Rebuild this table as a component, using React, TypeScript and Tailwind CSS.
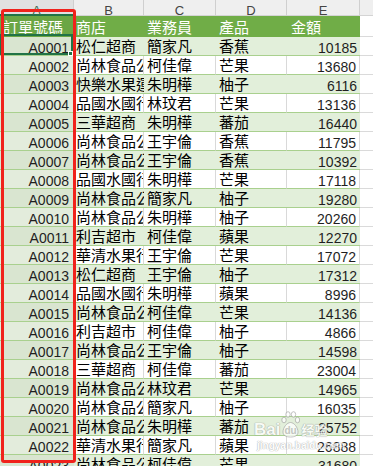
import React from "react";

type Row = [string, string, string, string, number];

const rows: Row[] = [
  ["A0001", "松仁超商", "簡家凡", "香蕉", 10185],
  ["A0002", "尚林食品公司", "柯佳偉", "芒果", 13680],
  ["A0003", "快樂水果運銷", "朱明樺", "柚子", 6116],
  ["A0004", "品國水國行", "林玟君", "芒果", 13136],
  ["A0005", "三華超商", "朱明樺", "蕃茄", 16440],
  ["A0006", "尚林食品公司", "王宇倫", "香蕉", 11795],
  ["A0007", "尚林食品公司", "王宇倫", "香蕉", 10392],
  ["A0008", "品國水國行", "朱明樺", "芒果", 17118],
  ["A0009", "尚林食品公司", "簡家凡", "柚子", 19280],
  ["A0010", "尚林食品公司", "朱明樺", "柚子", 20260],
  ["A0011", "利吉超市", "柯佳偉", "蘋果", 12270],
  ["A0012", "華清水果行", "王宇倫", "芒果", 17072],
  ["A0013", "松仁超商", "王宇倫", "柚子", 17312],
  ["A0014", "品國水國行", "朱明樺", "蘋果", 8996],
  ["A0015", "尚林食品公司", "柯佳偉", "芒果", 14136],
  ["A0016", "利吉超市", "柯佳偉", "柚子", 4866],
  ["A0017", "尚林食品公司", "王宇倫", "柚子", 14598],
  ["A0018", "三華超商", "柯佳偉", "蕃茄", 23004],
  ["A0019", "尚林食品公司", "林玟君", "芒果", 14965],
  ["A0020", "尚林食品公司", "簡家凡", "柚子", 16035],
  ["A0021", "尚林食品公司", "朱明樺", "蕃茄", 25752],
  ["A0022", "華清水果行", "簡家凡", "蘋果", 26888],
  ["A0023", "尚林食品公司", "柯佳偉", "芒果", 31680],
];

const cjk = "font-['Noto_Sans_CJK_TC',sans-serif]";
const latin = "font-['Liberation_Sans',sans-serif]";

function ColHeader({ letter, w, active }: { letter: string; w: string; active?: boolean }) {
  return (
    <div
      className={`${w} shrink-0 h-[16px] border-r border-r-[#cfcfcf] text-center pt-[4px] text-[13px] leading-[13px] ${latin} ${
        active ? "bg-[#e1e1e1] border-b-2 border-b-[#217346] text-[#3f6b4f]" : "bg-[#efefef] border-b border-b-[#d4d4d4] text-[#444]"
      }`}
    >
      {letter}
    </div>
  );
}

function Watermark() {
  return (
    <div className="pointer-events-none absolute left-[254px] top-[411px] opacity-75">
      <div className="flex items-end">
        <span className={`text-[17px] font-bold leading-[17px] text-white ${latin} [text-shadow:0_0_1px_#8a8a8a,0_0_1px_#8a8a8a]`}>
          Bai
        </span>
        <div className="relative ml-[1px] h-[27px] w-[19px]">
          <svg width="19" height="27" viewBox="0 0 19 27" className="absolute left-0 top-0">
            <g fill="#ffffff" stroke="#9a9a9a" strokeWidth="0.8">
              <ellipse cx="3" cy="9" rx="2.2" ry="2.8" />
              <ellipse cx="7" cy="3.5" rx="2.2" ry="2.8" />
              <ellipse cx="12.5" cy="3.5" rx="2.2" ry="2.8" />
              <ellipse cx="16.5" cy="9" rx="2.2" ry="2.8" />
              <path d="M9.5 11.5c3.5 0 7.5 5 7.5 9.5 0 3.5-3 5-7.5 5S2 24.5 2 21c0-4.5 4-9.5 7.5-9.5z" />
            </g>
          </svg>
          <span className={`absolute left-[3px] top-[15px] text-[10px] font-bold leading-[10px] text-[#b8b8b8] ${latin}`}>du</span>
        </div>
        <span className={`ml-[1px] text-[13px] font-bold leading-[17px] text-white font-['Noto_Sans_CJK_SC',sans-serif] [text-shadow:0_0_1px_#8a8a8a,0_0_1px_#8a8a8a]`}>
          经验
        </span>
      </div>
      <div className={`mt-[2px] pl-[3px] text-[10px] font-bold leading-[11px] text-white ${latin} [text-shadow:0_0_1px_#9a9a9a,0_0_1px_#9a9a9a]`}>
        jingyan.baidu.com
      </div>
    </div>
  );
}

export default function App() {
  return (
    <div className="relative h-[466px] w-[373px] overflow-hidden bg-white">
      {/* column letters */}
      <div className="flex">
        <ColHeader letter="A" w="w-[74px]" active />
        <ColHeader letter="B" w="w-[70px]" />
        <ColHeader letter="C" w="w-[72px]" />
        <ColHeader letter="D" w="w-[71px]" />
        <ColHeader letter="E" w="w-[73px]" />
        <div className="h-[16px] flex-1 border-b border-b-[#d4d4d4] bg-[#efefef]" />
      </div>

      {/* table header */}
      <div className={`flex h-[21px] text-[15px] leading-[21px] text-white ${cjk}`}>
        <div className="w-[74px] shrink-0 bg-[#6ba644] pl-[3px]">訂單號碼</div>
        <div className="w-[70px] shrink-0 bg-[#70ad47] pl-[2px]">商店</div>
        <div className="w-[72px] shrink-0 bg-[#70ad47] pl-[3px]">業務員</div>
        <div className="w-[71px] shrink-0 bg-[#70ad47] pl-[3px]">產品</div>
        <div className="w-[73px] shrink-0 bg-[#70ad47] pl-[4px]">金額</div>
        <div className="flex-1 border-b border-b-[#dadada] bg-white" />
      </div>

      {/* data rows */}
      {rows.map(([id, shop, rep, product, amount], i) => {
        const green = i % 2 === 0;
        const cell = green ? "bg-[#e2efda]" : "bg-white border-r border-r-[#d9d9d9]";
        return (
          <div key={id} className="flex h-[19px]">
            <div
              className={`w-[74px] shrink-0 border-b border-b-[#a9d08e] pr-[5px] pt-[3px] text-right text-[14px] leading-[16px] text-[#1f1f1f] ${latin} ${
                green ? "bg-[#d9e5d0]" : "bg-[#e3ecdc]"
              }`}
            >
              {id}
            </div>
            <div className={`w-[70px] shrink-0 overflow-hidden whitespace-nowrap border-b border-b-[#a9d08e] pl-[2px] text-[15px] leading-[17px] text-black ${cjk} ${cell}`}>
              {shop}
            </div>
            <div className={`w-[72px] shrink-0 overflow-hidden whitespace-nowrap border-b border-b-[#a9d08e] pl-[3px] text-[15px] leading-[17px] text-black ${cjk} ${cell}`}>
              {rep}
            </div>
            <div className={`w-[71px] shrink-0 overflow-hidden whitespace-nowrap border-b border-b-[#a9d08e] pl-[3px] text-[15px] leading-[17px] text-black ${cjk} ${cell}`}>
              {product}
            </div>
            <div className={`w-[73px] shrink-0 border-b border-b-[#a9d08e] pr-[3px] pt-[3px] text-right text-[14px] leading-[16px] text-[#1f1f1f] ${latin} ${cell}`}>
              {amount}
            </div>
            <div className="flex-1 border-b border-b-[#dadada]" />
          </div>
        );
      })}

      {/* active cell A2 */}
      <div className="pointer-events-none absolute left-0 top-[34px] h-[21px] w-[73px] border-2 border-[#217346]" />
      <div className="pointer-events-none absolute left-[68px] top-[51px] h-[5px] w-[5px] border border-white bg-[#217346]" />

      {/* red highlight box */}
      <div className="pointer-events-none absolute left-[1px] top-[9px] h-[454px] w-[75px] rounded-[3px] border-[3px] border-[#f0221c]" />

      <Watermark />
    </div>
  );
}
